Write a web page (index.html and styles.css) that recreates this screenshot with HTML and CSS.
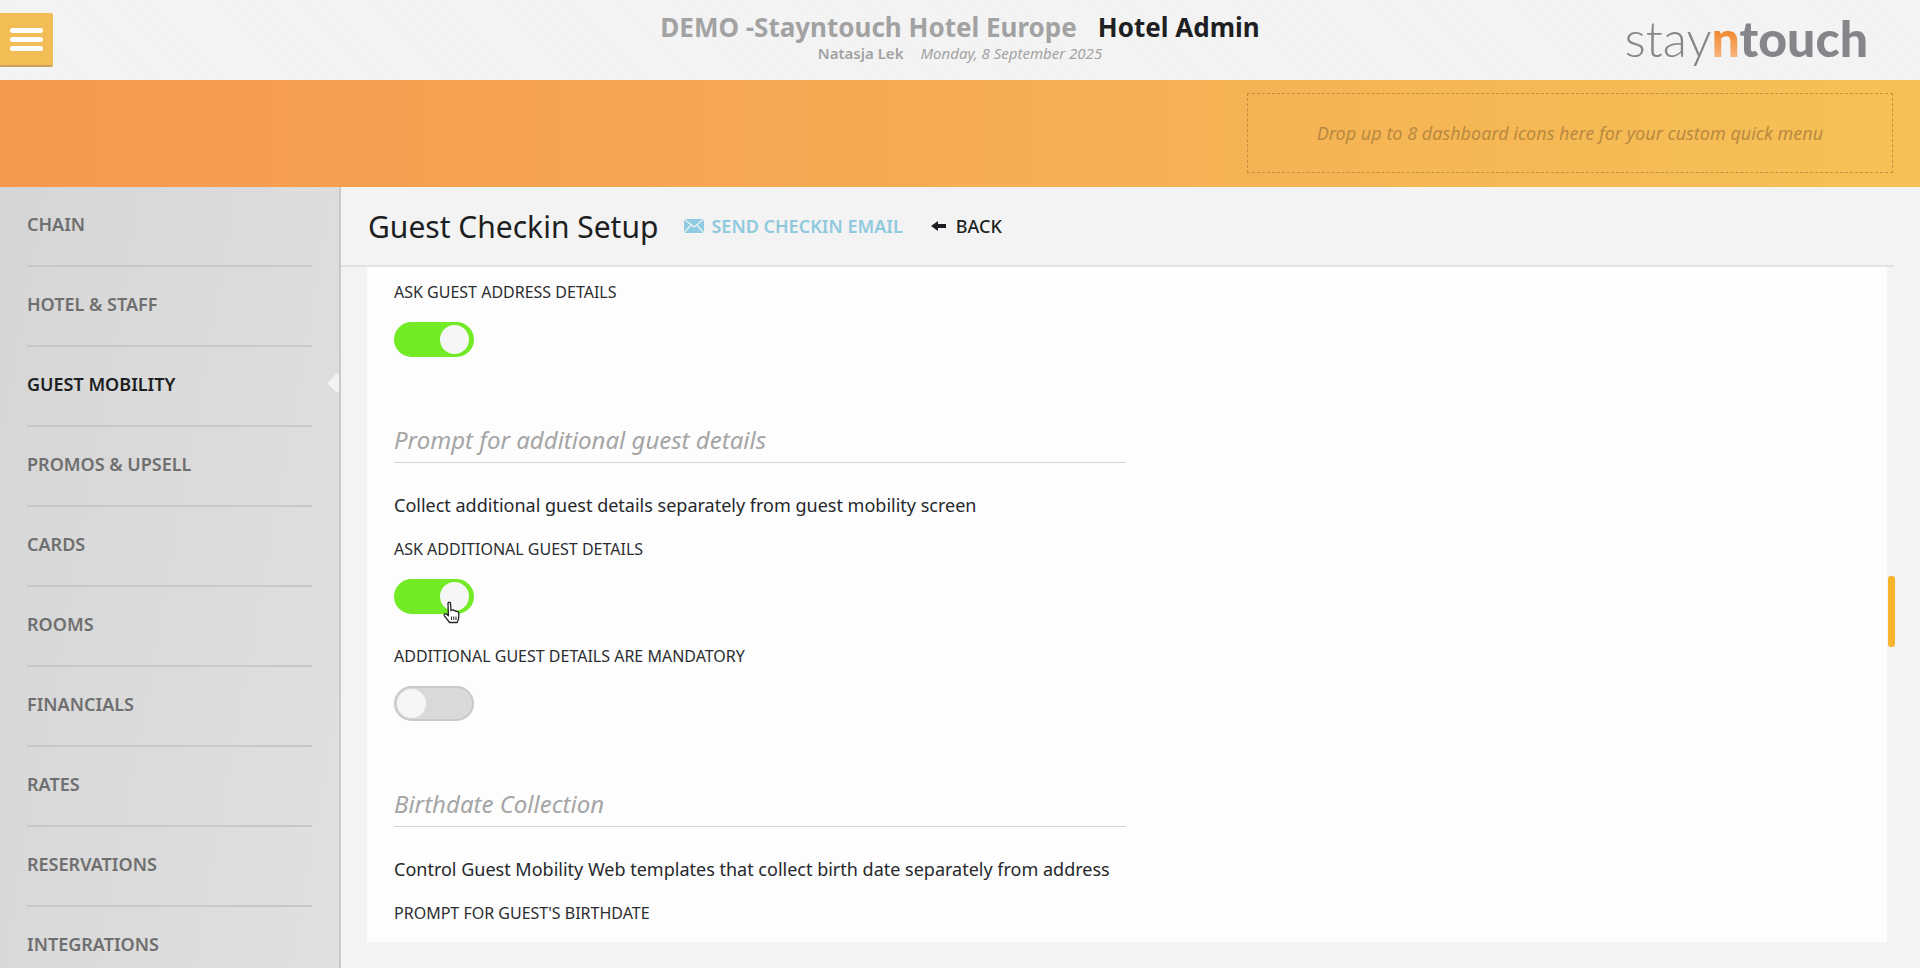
FILE: index.html
```html
<!DOCTYPE html>
<html lang="en">
<head>
    <meta charset="UTF-8">
    <meta name="viewport" content="width=device-width, initial-scale=1.0">
    <title>Guest Checkin Setup - Hotel Admin</title>
    <link rel="stylesheet" href="styles.css">
</head>
<body>
    <header class="top-bar">
        <div class="top-left">
            <button class="menu-button" aria-label="Menu">
                <span></span><span></span><span></span>
            </button>
        </div>
        <div class="top-center">
            <div class="top-title"><span class="hotel-name">DEMO -Stayntouch Hotel Europe</span><span class="app-name">Hotel Admin</span></div>
            <div class="top-sub"><span class="user-name">Natasja Lek</span><span class="today">Monday, 8 September 2025</span></div>
        </div>
        <div class="top-right">
            <div class="logo"><span class="logo-stay">stay</span><span class="logo-n">n</span><span class="logo-touch">touch</span></div>
        </div>
    </header>

    <div class="quick-band">
        <div class="drop-zone">Drop up to 8 dashboard icons here for your custom quick menu</div>
    </div>

    <div class="main">
        <nav class="sidebar">
            <a class="nav-item">CHAIN</a>
            <a class="nav-item">HOTEL &amp; STAFF</a>
            <a class="nav-item active">GUEST MOBILITY</a>
            <a class="nav-item">PROMOS &amp; UPSELL</a>
            <a class="nav-item">CARDS</a>
            <a class="nav-item">ROOMS</a>
            <a class="nav-item">FINANCIALS</a>
            <a class="nav-item">RATES</a>
            <a class="nav-item">RESERVATIONS</a>
            <a class="nav-item">INTEGRATIONS</a>
        </nav>

        <section class="content">
            <div class="content-header">
                <h1>Guest Checkin Setup</h1>
                <a class="send-link">
                    <svg class="mail-icon" viewBox="0 0 20 14" width="20" height="14"><rect width="20" height="14" fill="#8fcbe2"/><path d="M0 0 10 8 20 0M0 14 7 6M20 14 13 6" fill="none" stroke="#f3f3f3" stroke-width="1.2"/></svg>
                    SEND CHECKIN EMAIL
                </a>
                <a class="back-link">
                    <svg viewBox="0 0 16 12" width="16" height="12"><path d="M0 6 7 1V4H15V8H7V11Z" fill="#1d1f22"/></svg>
                    BACK
                </a>
            </div>

            <div class="card">
                <div class="field">
                    <div class="field-label">ASK GUEST ADDRESS DETAILS</div>
                    <div class="toggle on"></div>
                </div>

                <h2 class="section-title first">Prompt for additional guest details</h2>
                <p class="section-text">Collect additional guest details separately from guest mobility screen</p>
                <div class="field">
                    <div class="field-label">ASK ADDITIONAL GUEST DETAILS</div>
                    <div class="toggle on">
                        <svg class="hand-cursor" viewBox="0 0 18 24" width="18" height="24"><path d="M5 2.2C5 .8 7.4.8 7.5 2.2L8 9.6 9.2 9C10 8.6 10.9 9 11 9.7 11.9 9.3 12.9 9.7 13 10.5 14.2 10.1 15.6 10.8 15.7 12 16.1 15 15.8 18.5 14.2 21.5H6.6L1.4 14.8C.5 13.5 2.2 12 3.4 13L5.4 14.9Z" fill="#fff" stroke="#222" stroke-width="1.3" stroke-linejoin="round"/><path d="M8.6 15.5V19M10.8 15.5V19M13 15.5V19" stroke="#222" stroke-width="1"/></svg>
                    </div>
                </div>
                <div class="field">
                    <div class="field-label">ADDITIONAL GUEST DETAILS ARE MANDATORY</div>
                    <div class="toggle"></div>
                </div>

                <h2 class="section-title">Birthdate Collection</h2>
                <p class="section-text">Control Guest Mobility Web templates that collect birth date separately from address</p>
                <div class="field">
                    <div class="field-label">PROMPT FOR GUEST'S BIRTHDATE</div>
                </div>
            </div>
            <div class="scroll-thumb"></div>
        </section>
    </div>
</body>
</html>
```

FILE: styles.css
```css
* {
    box-sizing: border-box;
}

html, body {
    height: 100%;
}

body {
    margin: 0;
    overflow: hidden;
    font-family: 'Noto Sans', 'Open Sans', sans-serif;
    color: #1d1f22;
    background-color: #f3f3f3;
}

/* top bar */
.top-bar {
    height: 80px;
    display: grid;
    grid-template-columns: 1fr auto 1fr;
    background-color: #f4f4f4;
    background-image: repeating-linear-gradient(45deg, rgba(0, 0, 0, 0.012) 0 1px, transparent 1px 3px);
}

.menu-button {
    display: flex;
    flex-direction: column;
    justify-content: center;
    gap: 4px;
    width: 53px;
    height: 54px;
    margin-top: 13px;
    padding: 0 10px;
    border: none;
    border-bottom: 2px solid #c9a05c;
    border-radius: 0 2px 2px 0;
    background-color: #f3bd56;
}

.menu-button span {
    display: block;
    height: 5px;
    border-radius: 3px;
    background-color: #fff;
}

.top-center {
    text-align: center;
    padding-top: 9px;
}

.top-title {
    font-size: 26px;
    font-weight: 700;
    line-height: 36px;
    white-space: nowrap;
}

.hotel-name {
    color: #a2a2a2;
    margin-right: 21px;
}

.app-name {
    color: #1d1f22;
}

.top-sub {
    font-size: 15px;
    line-height: 20px;
    margin-top: -2px;
    color: #a2a2a2;
}

.user-name {
    font-weight: 600;
    margin-right: 17px;
}

.today {
    font-style: italic;
}

.top-right {
    display: flex;
    justify-content: flex-end;
    padding-right: 52px;
}

.logo {
    font-family: 'Lato', sans-serif;
    font-size: 50px;
    line-height: 76px;
    color: #85868a;
    white-space: nowrap;
}

.logo-stay {
    font-weight: 300;
}

.logo-n {
    font-weight: 900;
    background-image: linear-gradient(180deg, #ee7f22 30%, #f9c79b 100%);
    -webkit-background-clip: text;
    background-clip: text;
    color: transparent;
}

.logo-touch {
    font-weight: 900;
}

/* orange band */
.quick-band {
    height: 107px;
    display: flex;
    justify-content: flex-end;
    padding: 13px 27px 13px 0;
    background: linear-gradient(90deg, #f5984f 0%, #f6c156 100%);
}

.drop-zone {
    width: 646px;
    height: 80px;
    display: flex;
    align-items: center;
    justify-content: center;
    border: 1px dashed #c58d3e;
    font-size: 18px;
    font-style: italic;
    color: #b98a40;
}

/* main area */
.main {
    display: flex;
    height: 781px;
}

.sidebar {
    width: 341px;
    flex-shrink: 0;
    padding: 0 27px;
    overflow: hidden;
    background-color: #dcdcdc;
    background-image: linear-gradient(100deg, #d6d6d6 0%, #e0e0e0 100%);
    border-right: 2px solid #c9c9c9;
}

.nav-item {
    display: flex;
    align-items: center;
    position: relative;
    height: 80px;
    flex-shrink: 0;
    border-bottom: 2px solid #c8c8c8;
    font-size: 18px;
    font-weight: 600;
    color: #6f6f6f;
    padding-bottom: 4px;
}

.nav-item.active {
    color: #1d1f22;
}

/* little notch pointing at the content */
.nav-item.active::after {
    content: "";
    position: absolute;
    right: -27px;
    top: 29px;
    width: 14px;
    height: 14px;
    margin-right: -5px;
    background-color: #f3f3f3;
    transform: rotate(45deg);
}

.content {
    position: relative;
    flex: 1;
    padding-left: 26px;
}

.content-header {
    display: flex;
    align-items: center;
    width: 1553px;
    margin-left: -26px;
    padding-left: 27px;
    height: 80px;
    border-bottom: 2px solid #e2e2e2;
}

.content-header h1 {
    margin: 0;
    font-size: 30px;
    font-weight: 400;
    color: #1d1f22;
}

.send-link {
    display: flex;
    align-items: center;
    gap: 7px;
    margin-left: 26px;
    font-size: 18px;
    font-weight: 600;
    color: #8fc9de;
}

.back-link {
    display: flex;
    align-items: center;
    gap: 9px;
    margin-left: 28px;
    font-size: 18px;
    font-weight: 500;
    color: #1d1f22;
}

.card {
    width: 1520px;
    height: 675px;
    padding: 13px 27px 0;
    overflow: hidden;
    background-color: #fdfdfd;
}

.field-label {
    font-size: 16px;
    line-height: 24px;
    color: #2b2d30;
}

.toggle {
    position: relative;
    width: 80px;
    height: 35px;
    margin: 18px 0 30px;
    border: 2px solid #c9c9c9;
    border-radius: 18px;
    background-color: #d9d9d9;
}

.toggle::after {
    content: "";
    position: absolute;
    left: 1px;
    top: 1px;
    width: 29px;
    height: 29px;
    border-radius: 50%;
    background-color: #f6f6f6;
}

.toggle.on {
    border-color: #72ea26;
    background-color: #72ea26;
}

.toggle.on::after {
    left: auto;
    right: 3px;
}

.hand-cursor {
    position: absolute;
    z-index: 1;
    left: 47px;
    top: 20px;
}

.section-title {
    margin: 66px 0 0;
    padding-bottom: 5px;
    width: 732px;
    border-bottom: 1px solid #d5d5d5;
    font-size: 24px;
    font-weight: 400;
    font-style: italic;
    line-height: 34px;
    color: #a5a5a5;
}

.section-text {
    margin: 29px 0 19px;
    font-size: 18px;
    line-height: 26px;
    color: #26282b;
}

.scroll-thumb {
    position: absolute;
    left: 1547px;
    top: 389px;
    width: 7px;
    height: 71px;
    border-radius: 3px;
    background-color: #f7b32b;
}
```
